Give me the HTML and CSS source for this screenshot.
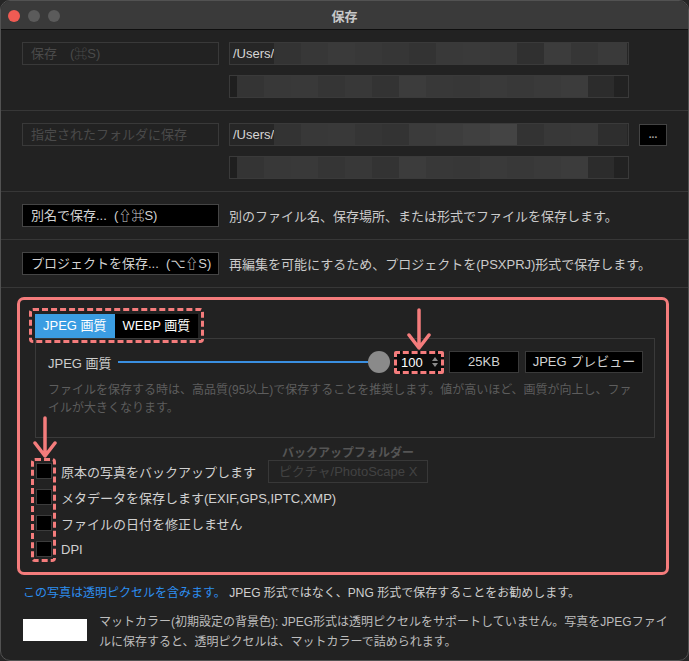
FILE: index.html
```html
<!DOCTYPE html>
<html lang="ja">
<head>
<meta charset="utf-8">
<title>保存</title>
<link rel="stylesheet" href="styles.css">
</head>
<body>
<div class="window">
  <header class="titlebar">
    <div class="lights"><span class="light red"></span><span class="light"></span><span class="light"></span></div>
    <div class="title">保存</div>
    <div></div>
  </header>

  <section class="sec">
    <div class="grid">
      <button class="btn disabled">保存　(⌘S)</button>
      <div class="field"><span class="path">/Users/</span><span class="blur blur-a"></span></div>
      <div class="field second blur-b"></div>
    </div>
  </section>

  <section class="sec">
    <div class="grid">
      <button class="btn disabled">指定されたフォルダに保存</button>
      <div class="field"><span class="path">/Users/</span><span class="blur blur-c"></span></div>
      <button class="dots">...</button>
      <div class="field second blur-b"></div>
    </div>
  </section>

  <section class="sec">
    <div class="line">
      <button class="btn">別名で保存...  (⇧⌘S)</button>
      <span class="desc">別のファイル名、保存場所、または形式でファイルを保存します。</span>
    </div>
  </section>

  <section class="sec">
    <div class="line">
      <button class="btn">プロジェクトを保存...  (⌥⇧S)</button>
      <span class="desc">再編集を可能にするため、プロジェクトを(PSXPRJ)形式で保存します。</span>
    </div>
  </section>

  <div class="highlight">
    <div class="tabs">
      <span class="tab active">JPEG 画質</span>
      <span class="tab">WEBP 画質</span>
      <span class="mark tabs-mark"></span>
    </div>
    <div class="panel">
      <div class="qrow">
        <span class="qlabel">JPEG 画質</span>
        <div class="slider"><span class="track"></span><span class="knob"></span></div>
        <div class="spin">
          <span class="spin-value">100</span>
          <svg class="spin-arrows" width="8" height="12" viewBox="0 0 8 12"><path d="M4 1 L7 5 L1 5 Z M4 11 L7 7 L1 7 Z" fill="#8a8a8a"/></svg>
          <svg class="arrow arrow-spin" width="26" height="42" viewBox="0 0 26 42"><path d="M13 2 V40 M3 27 L13 40 L23 27" fill="none" stroke="#f47c7c" stroke-width="3.5" stroke-linecap="round" stroke-linejoin="round"/></svg>
        </div>
        <span class="box size">25KB</span>
        <span class="box preview">JPEG プレビュー</span>
      </div>
      <p class="help">ファイルを保存する時は、高品質(95以上)で保存することを推奨します。値が高いほど、画質が向上し、ファ<br>イルが大きくなります。</p>
    </div>

    <div class="options">
      <svg class="arrow arrow-check" width="26" height="42" viewBox="0 0 26 42"><path d="M13 2 V40 M3 27 L13 40 L23 27" fill="none" stroke="#f47c7c" stroke-width="3.5" stroke-linecap="round" stroke-linejoin="round"/></svg>
      <span class="mark checks-mark"></span>
      <div class="opt">
        <span class="check"></span><span>原本の写真をバックアップします</span>
        <div class="backup">
          <span class="backup-caption">バックアップフォルダー</span>
          ピクチャ/PhotoScape X
        </div>
      </div>
      <div class="opt"><span class="check"></span><span>メタデータを保存します(EXIF,GPS,IPTC,XMP)</span></div>
      <div class="opt"><span class="check"></span><span>ファイルの日付を修正しません</span></div>
      <div class="opt"><span class="check"></span><span>DPI</span></div>
    </div>
  </div>

  <p class="notice"><span class="em">この写真は透明ピクセルを含みます。</span> JPEG 形式ではなく、PNG 形式で保存することをお勧めします。</p>

  <div class="matte">
    <span class="swatch"></span>
    <p class="matte-text">マットカラー(初期設定の背景色): JPEG形式は透明ピクセルをサポートしていません。写真をJPEGファイ<br>ルに保存すると、透明ピクセルは、マットカラーで詰められます。</p>
  </div>
</div>
</body>
</html>
```

FILE: styles.css
```css
* { box-sizing: border-box; margin: 0; padding: 0; }

html, body { background: #262626; }

body {
  margin: 0;
  font-family: "Liberation Sans", "Noto Sans CJK JP", "DejaVu Sans", sans-serif;
  font-size: 13px;
  color: #cfcfcf;
}

.window {
  width: 689px;
  height: 661px;
  background: #222222;
  border: 1px solid #525252;
  border-radius: 10px;
  overflow: hidden;
}

/* title bar */
.titlebar {
  height: 29px;
  background: #3a3a3a;
  border-bottom: 1px solid #0f0f0f;
  display: grid;
  grid-template-columns: 1fr auto 1fr;
  align-items: center;
}
.lights { display: flex; gap: 8px; padding-left: 7px; padding-top: 2px; }
.light { width: 12px; height: 12px; border-radius: 50%; background: #5b5b5b; }
.light.red { background: #ef5b53; }
.title { font-size: 13px; font-weight: bold; color: #c8c8c8; }

/* sections */
.sec {
  padding: 12px 0 12px 21px;
  border-bottom: 1px solid #373737;
}
.grid {
  display: grid;
  grid-template-columns: 197px 400px 28px;
  column-gap: 10px;
  row-gap: 10px;
  align-items: center;
}
.line { display: flex; align-items: center; gap: 10px; }

.btn {
  width: 197px;
  height: 23px;
  border: 1px solid #454545;
  background: #000;
  color: #d2d2d2;
  font: inherit;
  text-align: left;
  padding: 0 8px;
  line-height: 21px;
  white-space: pre;
}
.btn.disabled {
  background: transparent;
  border-color: #393939;
  color: #4a4a4a;
}
.desc { color: #cbcbcb; white-space: nowrap; }

.field {
  height: 23px;
  border: 1px solid #3a3a3a;
  background: #262626;
  display: flex;
}
.field.second { grid-column: 2; }
.path { padding-left: 3px; line-height: 21px; color: #d6d6d6; }
.blur { flex: 1; margin-right: 1px; }

.blur-a {
  background: linear-gradient(to right,
    #333 0 27px, #373737 27px 54px, #3a3a3a 54px 81px, #383838 81px 108px,
    #363636 108px 135px, #333 135px 162px, #393939 162px 189px, #3a3a3a 189px 216px,
    #393939 216px 243px, #303030 243px 270px, #3c3c3c 270px 297px, #363636 297px 324px,
    #3a3a3a 324px);
}
.blur-c {
  background: linear-gradient(to right,
    #333 0 27px, #383838 27px 54px, #393939 54px 81px, #353535 81px 108px,
    #333 108px 135px, #3b3b3b 135px 162px, #3d3d3d 162px 189px, #404040 189px 216px,
    #444 216px 243px, #333 243px 270px, #383838 270px 297px, #393939 297px 324px,
    #2e2e2e 324px);
}
.blur-b {
  background: linear-gradient(to right,
    #1f1f1f 0 7px, #343434 7px 34px, #383838 34px 61px, #393939 61px 88px,
    #353535 88px 115px, #383838 115px 142px, #333 142px 169px, #3c3c3c 169px 196px,
    #383838 196px 223px, #373737 223px 250px, #3a3a3a 250px 277px, #383838 277px 304px,
    #3a3a3a 304px 331px, #3c3c3c 331px 358px, #2c2c2c 358px 384px, #222 384px);
}

.dots {
  width: 28px;
  height: 22px;
  background: #000;
  border: 1px solid #444;
  color: #aaa;
  font: 10px/18px "Liberation Sans", sans-serif;
  font-weight: bold;
  text-align: center;
}

/* highlighted area */
.highlight {
  margin: 9px 19px 0 16px;
  border: 3px solid #f47c7c;
  border-radius: 7px;
  padding: 14px 11px 10px 15px;
}
.mark {
  position: absolute;
  border: 3px dashed #f47c7c;
  border-radius: 4px;
  pointer-events: none;
}
.tabs { display: flex; position: relative; width: max-content; height: 24px; }
.tab { padding: 0 8px; line-height: 24px; color: #fff; background: #000; white-space: nowrap; }
.tab.active { background: #3b9de2; }
.tabs-mark { left: -6px; right: -6px; top: -6px; bottom: -5px; }

.panel {
  border: 1px solid #3a3a3a;
  height: 100px;
  padding: 12px 11px 0 12px;
}
.qrow { display: flex; align-items: center; height: 22px; }
.qlabel { margin-right: 6px; white-space: nowrap; color: #cdcdcd; }
.slider { flex: 1; display: flex; align-items: center; }
.track { flex: 1; height: 2px; background: #3a8fe0; }
.knob { width: 22px; height: 22px; border-radius: 50%; background: #8a8a8a; }

.spin {
  position: relative;
  margin-left: 4px;
  width: 50px;
  height: 23px;
  border: 3px dashed #f47c7c;
  border-radius: 2px;
  background: #0c0c0c;
  display: flex;
  align-items: center;
  padding-left: 4px;
}
.spin-value { color: #fff; width: 30px; }
.spin-arrows { display: block; }

.arrow { position: absolute; display: block; }
.arrow-spin { left: 9px; top: -46px; }
.arrow-check { left: -4px; top: -42px; }

.box {
  height: 22px;
  background: #000;
  border: 1px solid #3a3a3a;
  text-align: center;
  line-height: 20px;
  color: #d2d2d2;
  white-space: nowrap;
}
.size { width: 70px; margin-left: 5px; }
.preview { width: 118px; margin-left: 6px; }

.help {
  margin-top: 8px;
  font-size: 12px;
  line-height: 18px;
  color: #5d5d5d;
  white-space: nowrap;
}

.options { position: relative; margin-top: 20px; margin-left: 1px; }
.checks-mark { left: -5px; top: 0; width: 25px; height: 104px; }
.opt { display: flex; align-items: center; height: 26px; white-space: nowrap; color: #d0d0d0; }
.check {
  width: 16px;
  height: 16px;
  background: #000;
  border: 1px solid #3c3c3c;
  margin-right: 9px;
  flex: none;
}
.backup {
  position: relative;
  margin-left: 12px;
  width: 160px;
  height: 23px;
  border: 1px solid #383838;
  color: #424242;
  text-align: center;
  line-height: 21px;
}
.backup-caption {
  position: absolute;
  bottom: 100%;
  left: -20px;
  right: -20px;
  text-align: center;
  font-size: 12px;
  font-weight: bold;
  line-height: 16px;
  color: #555;
}

/* bottom notes */
.notice {
  margin: 10px 0 0 22px;
  font-size: 12px;
  line-height: 16px;
  color: #cfcfcf;
  white-space: nowrap;
}
.notice .em { color: #2d8ef0; }

.matte { display: flex; gap: 12px; margin: 11px 0 0 22px; }
.swatch { flex: none; width: 64px; height: 22px; margin-top: 7px; background: #fff; }
.matte-text {
  font-size: 12px;
  line-height: 20px;
  color: #bdbdbd;
  white-space: nowrap;
}
```
